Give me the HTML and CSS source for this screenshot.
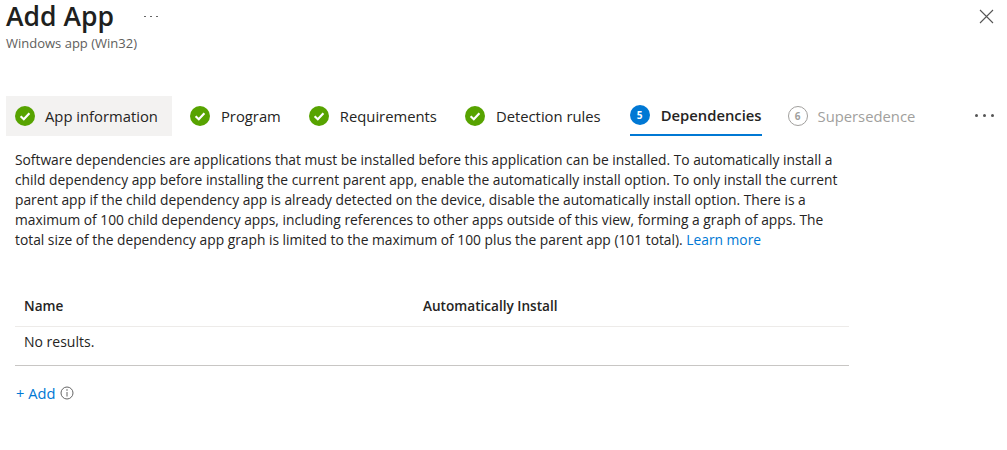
FILE: index.html
```html
<!DOCTYPE html>
<html lang="en">
<head>
    <meta charset="UTF-8">
    <title>Add App</title>
    <link rel="stylesheet" href="styles.css">
</head>
<body>
    <header class="header">
        <div class="title-block">
            <div class="title-row">
                <h1>Add App</h1>
                <span class="title-more"><i></i><i></i><i></i></span>
            </div>
            <div class="subtitle">Windows app (Win32)</div>
        </div>
        <svg class="close" width="16" height="16" viewBox="0 0 16 16"><path d="M2 2 L15 15 M15 2 L2 15" stroke="#555" stroke-width="1.1" fill="none"/></svg>
    </header>

    <nav class="steps">
        <div class="step step-hover">
            <svg class="check" width="20" height="20" viewBox="0 0 20 20"><circle cx="10" cy="10" r="10" fill="#57a300"/><path d="M5.6 10.2 L8.8 13.2 L14.4 7.2" stroke="#fff" stroke-width="2.2" fill="none"/></svg>
            <span>App information</span>
        </div>
        <div class="step">
            <svg class="check" width="20" height="20" viewBox="0 0 20 20"><circle cx="10" cy="10" r="10" fill="#57a300"/><path d="M5.6 10.2 L8.8 13.2 L14.4 7.2" stroke="#fff" stroke-width="2.2" fill="none"/></svg>
            <span>Program</span>
        </div>
        <div class="step">
            <svg class="check" width="20" height="20" viewBox="0 0 20 20"><circle cx="10" cy="10" r="10" fill="#57a300"/><path d="M5.6 10.2 L8.8 13.2 L14.4 7.2" stroke="#fff" stroke-width="2.2" fill="none"/></svg>
            <span>Requirements</span>
        </div>
        <div class="step">
            <svg class="check" width="20" height="20" viewBox="0 0 20 20"><circle cx="10" cy="10" r="10" fill="#57a300"/><path d="M5.6 10.2 L8.8 13.2 L14.4 7.2" stroke="#fff" stroke-width="2.2" fill="none"/></svg>
            <span>Detection rules</span>
        </div>
        <div class="step step-active">
            <span class="num num-active">5</span>
            <span>Dependencies</span>
        </div>
        <div class="step step-off">
            <span class="num num-off">6</span>
            <span>Supersedence</span>
        </div>
        <div class="steps-more">
            <i></i><i></i><i></i>
        </div>
    </nav>

    <main class="content">
        <p class="desc">Software dependencies are applications that must be installed before this application can be installed. To automatically install a child dependency app before installing the current parent app, enable the automatically install option. To only install the current parent app if the child dependency app is already detected on the device, disable the automatically install option. There is a maximum of 100 child dependency apps, including references to other apps outside of this view, forming a graph of apps. The total size of the dependency app graph is limited to the maximum of 100 plus the parent app (101 total). <a href="#">Learn more</a></p>

        <div class="table">
            <div class="row row-head">
                <div class="cell-name">Name</div>
                <div>Automatically Install</div>
            </div>
            <div class="row row-body">
                <div>No results.</div>
            </div>
        </div>

        <div class="add-row">
            <a href="#">+ Add</a>
            <svg width="14" height="14" viewBox="0 0 14 14"><circle cx="7" cy="7" r="6" stroke="#666" fill="none"/><path d="M7 6 V10.5" stroke="#666" fill="none"/><circle cx="7" cy="4" r=".8" fill="#666"/></svg>
        </div>
    </main>
</body>
</html>
```

FILE: styles.css
```css
body{
    margin: 0;
    background: white;
    color: #252423;
    font-family: "Open Sans", "Noto Sans", sans-serif;
    font-size: 14px;
    height: 450px;
    overflow: hidden;
}
.header{
    display: flex;
    justify-content: space-between;
    align-items: flex-start;
    padding: 0 12px 0 6px;
    height: 96px;
}
.title-row{
    display: flex;
    align-items: center;
    height: 33px;
}
h1{
    margin: 0;
    font-size: 26.5px;
    font-weight: 600;
    line-height: 33px;
    color: #201f1e;
}
.title-more{
    display: flex;
    gap: 4px;
    margin-left: 30px;
}
.title-more i{
    width: 2px;
    height: 1px;
    background: #666;
}
.subtitle{
    font-size: 13px;
    line-height: 20px;
    color: #605e5c;
}
.close{
    margin-top: 8px;
    margin-right: 1px;
}
.steps{
    display: flex;
    align-items: stretch;
    height: 40px;
    padding-left: 6px;
    font-size: 14.8px;
    position: relative;
}
.step{
    display: flex;
    align-items: center;
    gap: 11px;
    padding: 0 10px 0 9px;
    margin-right: 9px;
    white-space: nowrap;
}
.step-hover{
    gap: 10px;
    padding-right: 14px;
    background: #f3f2f1;
}
.step-active{
    gap: 11px;
    font-weight: 600;
    padding: 0;
    margin: 0 26px 0 10px;
    border-bottom: 2px solid #0078d4;
}
.step-off{
    gap: 10px;
    padding: 0;
    color: #a19f9d;
}
.num{
    display: flex;
    align-items: center;
    justify-content: center;
    width: 20px;
    height: 20px;
    border-radius: 50%;
    font-size: 10px;
    font-weight: 700;
    box-sizing: border-box;
}
.num-active{
    background: #0078d4;
    color: white;
}
.num-off{
    border: 1px solid #a19f9d;
    color: #a19f9d;
}
.steps-more{
    position: absolute;
    left: 975px;
    top: 18px;
    display: flex;
    gap: 5px;
}
.steps-more i{
    width: 3px;
    height: 3px;
    border-radius: 50%;
    background: #555;
}
.content{
    padding: 14px 0 0 15px;
}
.desc{
    margin: 0;
    width: 830px;
    line-height: 20px;
    font-size: 13.8px;
}
a{
    color: #0078d4;
    text-decoration: none;
}
.table{
    width: 834px;
    margin-top: 37px;
    border-bottom: 1px solid #c8c6c4;
}
.row{
    display: flex;
    padding-left: 9px;
}
.row-head{
    height: 40px;
    align-items: center;
    font-size: 13.6px;
    font-weight: 600;
    padding-bottom: 3px;
    box-sizing: border-box;
    border-bottom: 1px solid #edebe9;
}
.row-body{
    height: 38px;
    align-items: flex-start;
    padding-top: 5px;
    box-sizing: border-box;
}
.cell-name{
    width: 399px;
}
.add-row{
    display: flex;
    align-items: center;
    gap: 5px;
    margin-top: 17px;
    padding-left: 1px;
    font-size: 14.7px;
}
```
